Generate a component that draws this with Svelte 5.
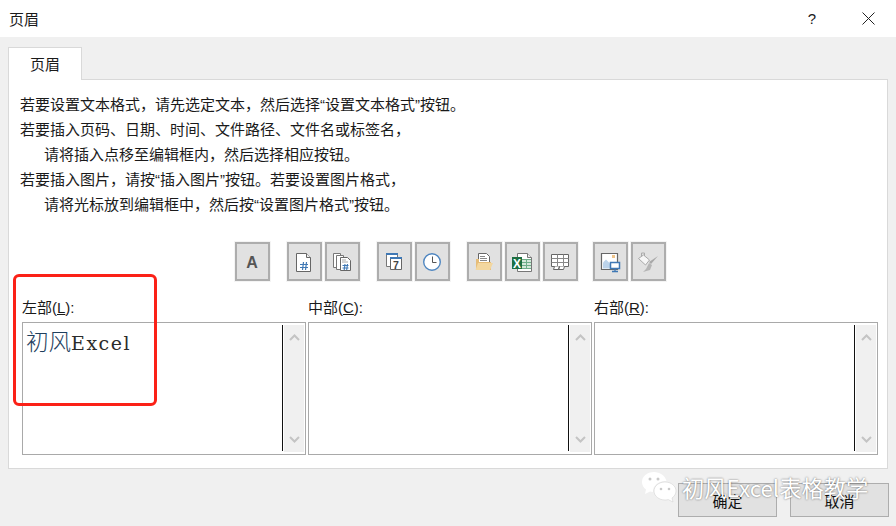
<script>
  const editors = [
    { label: '左部', key: 'L', cjk: '初风', latin: 'Excel' },
    { label: '中部', key: 'C', cjk: '', latin: '' },
    { label: '右部', key: 'R', cjk: '', latin: '' }
  ];
</script>

{#snippet tool(id)}
  <button class="tool" aria-label={id}>
    <svg width="31" height="35" viewBox="0 0 31 35">
      {#if id === 'text'}
        <text x="15" y="24" text-anchor="middle" class="a">A</text>
      {:else if id === 'page'}
        <path d="M7.500 9.500h10l4 4v14h-14z" fill="#fff" stroke="#666" />
        <path d="M17.500 9.500v4h4" fill="#eee" stroke="#666" />
        <path d="M11 20.500h8M11 23.500h8M14.500 18l-1 8M17.500 18l-1 8" stroke="#3f78b5" stroke-width="1.200" fill="none" />
      {:else if id === 'pages'}
        <path d="M6.500 9.500h7v14h-7z" fill="#fff" stroke="#777" />
        <path d="M9.500 11.500h7v14h-7z" fill="#fff" stroke="#777" />
        <path d="M13.500 13.500h7l3 3v10h-10z" fill="#fff" stroke="#666" />
        <path d="M15 16h4M15 18h6" stroke="#aaa" />
        <path d="M15.500 21.500h6M15.500 24h6M18 20l-.8 6M20.500 20l-.8 6" stroke="#3f78b5" stroke-width="1.100" fill="none" />
      {:else if id === 'date'}
        <path d="M7.500 10.500h11v12h-11z" fill="#fff" stroke="#777" />
        <path d="M7 9h12v2H7z" fill="#3f78b5" />
        <path d="M11.500 14.500h11v11h-11z" fill="#fff" stroke="#666" />
        <path d="M11 13h12v2H11z" fill="#3f78b5" />
        <text x="17" y="24.500" text-anchor="middle" class="seven">7</text>
      {:else if id === 'time'}
        <circle cx="15" cy="18" r="8.300" fill="#fff" stroke="#4f86c0" stroke-width="1.400" />
        <path d="M15.500 12.500v6h4" stroke="#555" fill="none" />
      {:else if id === 'path'}
        <path d="M9.500 9.500h8l3 3v8h-11z" fill="#fff" stroke="#666" />
        <path d="M11 12.500h5M11 14.500h7M11 16.500h7" stroke="#888" />
        <path d="M7 15h3v3h12v8H7z" fill="#e6bd78" />
        <path d="M9 19h15l-3 7H6.500z" fill="#f3d79f" />
      {:else if id === 'file'}
        <path d="M10.500 9.500h10l4 4v14h-14z" fill="#fff" stroke="#777" />
        <path d="M20.500 9.500v4h4" fill="#eee" stroke="#777" />
        <path d="M15 15h9v9h-9z" fill="#d5e8db" />
        <path d="M15 15.500h9M15 18.500h9M15 21.500h9M15 24.500h9M19.500 15v10" stroke="#6fae89" />
        <path d="M5 13h10v12H5z" fill="#1d6f42" />
        <text x="10" y="23.500" text-anchor="middle" class="x">X</text>
      {:else if id === 'sheet'}
        <path d="M6.500 10.500h17v12h-17z" fill="#fff" stroke="#666" />
        <path d="M6.500 14.500h17M6.500 18.500h17M12.500 10.500v12M18.500 10.500v12" stroke="#888" fill="none" />
        <path d="M9.500 22.500l-1 3h5l1-3M14.500 22.500l-1 3h5l1-3" fill="#fff" stroke="#666" />
      {:else if id === 'picture'}
        <path d="M6.500 9.500h16v16h-16z" fill="#fff" stroke="#666" stroke-width="1.200" />
        <path d="M8 24.500v-6l3-3 4 4v5z" fill="#bcd3ea" />
        <rect x="17" y="11" width="3" height="3" fill="#efc48a" />
        <path d="M15.500 18.500h9v6h-9z" fill="#fff" stroke="#3f78b5" stroke-width="1.500" />
        <path d="M20 25v3M17 27.500h6" stroke="#3f78b5" stroke-width="1.300" />
      {:else}
        <path d="M5.500 14.500l5-3.500 6 5-4 5z" fill="#f6f6f6" stroke="#aaa" />
        <path d="M8.500 12v-3h3v3" fill="none" stroke="#aaa" />
        <path d="M25 12l-7 8-2-2z" fill="#a8a8a8" />
        <path d="M16 19l3 2-2 5-7 2 3-3z" fill="#b5b5b5" />
      {/if}
    </svg>
  </button>
{/snippet}

<div class="dialog">
  <header class="titlebar">
    <span class="title">页眉</span>
    <div class="controls">
      <span class="help">?</span>
      <svg class="close" width="13" height="13" viewBox="0 0 13 13"><path d="M.5.500l12 12M12.500.500l-12 12" stroke="#222" fill="none" /></svg>
    </div>
  </header>

  <div class="body">
    <div class="tabs"><div class="tab">页眉</div></div>
    <section class="panel">
      <div class="intro">
        <p>若要设置文本格式，请先选定文本，然后选择“设置文本格式”按钮。</p>
        <p>若要插入页码、日期、时间、文件路径、文件名或标签名，</p>
        <p class="indent">请将插入点移至编辑框内，然后选择相应按钮。</p>
        <p>若要插入图片，请按“插入图片”按钮。若要设置图片格式，</p>
        <p class="indent">请将光标放到编辑框中，然后按“设置图片格式”按钮。</p>
      </div>

      <div class="toolbar">
        <div class="group">{@render tool('text')}</div>
        <div class="group">{@render tool('page')}{@render tool('pages')}</div>
        <div class="group">{@render tool('date')}{@render tool('time')}</div>
        <div class="group">{@render tool('path')}{@render tool('file')}{@render tool('sheet')}</div>
        <div class="group last">{@render tool('picture')}{@render tool('format')}</div>
      </div>

      <div class="editors">
        {#each editors as e}
          <div class="editor">
            <div class="label">{e.label}(<u>{e.key}</u>):</div>
            <div class="box">
              <div class="content"><span class="cjk">{e.cjk}</span><span class="latin">{e.latin}</span></div>
              <div class="scroll">
                <svg width="11" height="7" viewBox="0 0 11 7"><path d="M1 6l4.500-4.500L10 6" fill="none" stroke="#c4c4c4" stroke-width="2" /></svg>
                <svg width="11" height="7" viewBox="0 0 11 7"><path d="M1 1l4.500 4.500L10 1" fill="none" stroke="#c4c4c4" stroke-width="2" /></svg>
              </div>
            </div>
          </div>
        {/each}
      </div>
    </section>

    <footer class="footer">
      <button class="action">确定</button>
      <button class="action">取消</button>
    </footer>
  </div>

  <div class="highlight"></div>

  <div class="watermark">
    <svg width="36" height="32" viewBox="0 0 36 32">
      <path d="M13 1C6 1 1 5.500 1 11c0 3 1.500 5.500 4 7.500L4 23l5-2.500c1 .3 2 .4 3 .5-.5-6 5-11 12-11 .5 0 1 0 1.500.1C24 4.500 19 1 13 1z" fill="#fff" />
      <path d="M35 20c0-5-5-9-11-9s-11 4-11 9 5 9 11 9c1.200 0 2.200-.1 3.300-.4L32 31l-1-4c2.500-1.700 4-4.200 4-7z" fill="#fff" stroke="#ccc" stroke-width=".5" />
      <circle cx="9" cy="8" r="1.500" fill="#c9c9c9" /><circle cx="17" cy="8" r="1.500" fill="#c9c9c9" />
      <circle cx="20" cy="18" r="1.300" fill="#c9c9c9" /><circle cx="28" cy="18" r="1.300" fill="#c9c9c9" />
    </svg>
    <span>初风Excel表格教学</span>
  </div>
</div>

<style>
  :global(body) { margin: 0; }
  .dialog {
    position: relative;
    width: 896px;
    height: 526px;
    overflow: hidden;
    background: #f0f0f0;
    color: #1a1a1a;
    font-family: "Liberation Sans", "Noto Sans CJK SC", sans-serif;
    font-size: 15px;
  }
  .titlebar {
    height: 37px;
    background: #fff;
    display: flex;
    align-items: center;
    justify-content: space-between;
    padding: 0 21px 0 9px;
  }
  .controls { display: flex; align-items: center; gap: 46px; }
  .help { font-size: 15px; }
  .close { display: block; margin-top: -1px; }
  .body { padding: 10px 8px 0; }
  .tabs { display: flex; height: 33px; }
  .tab {
    width: 74px;
    height: 33px;
    box-sizing: border-box;
    background: #fff;
    border: 1px solid #d9d9d9;
    border-bottom: 0;
    position: relative;
    z-index: 1;
    text-align: center;
    line-height: 34px;
  }
  .panel {
    width: 880px;
    height: 390px;
    margin-top: -1px;
    box-sizing: border-box;
    background: #fff;
    border: 1px solid #d9d9d9;
    padding: 12px 8px 0 13px;
  }
  .intro { height: 150px; margin-left: -2px; }
  .intro p { margin: 0; height: 25px; line-height: 25px; white-space: nowrap; }
  .indent { padding-left: 24px; }
  .toolbar {
    display: flex;
    gap: 17px;
    height: 40px;
    padding-left: 213px;
  }
  .group { display: flex; gap: 3px; }
  .group.last { margin-left: -2px; }
  .tool {
    width: 35px;
    height: 39px;
    padding: 0;
    background: #e1e1e1;
    border: 2px solid #adadad;
    outline: 1px solid #f4f4f4;
    display: flex;
    align-items: flex-start;
    justify-content: flex-start;
  }
  .tool svg { display: block; }
  .a { font-family: "Liberation Sans", sans-serif; font-weight: 700; font-size: 16px; fill: #555; }
  .seven { font-family: "Liberation Sans", sans-serif; font-size: 10.500px; font-weight: 700; fill: #444; }
  .x { font-family: "Liberation Sans", sans-serif; font-size: 12px; font-weight: 700; fill: #fff; }
  .editors { display: flex; gap: 2px; margin-top: 14px; }
  .editor { width: 284px; }
  .label { height: 26px; line-height: 24px; white-space: nowrap; }
  .box {
    height: 133px;
    box-sizing: border-box;
    border: 1px solid #a9a9a9;
    display: flex;
    background: #fff;
  }
  .content {
    flex: 1;
    height: 126px;
    line-height: 30px;
    padding-left: 3px;
    border-right: 1px solid #111;
    margin: 2px 0;
    white-space: nowrap;
  }
  .cjk { font-family: "Noto Sans CJK SC", sans-serif; font-size: 22.500px; font-weight: 300; color: #1f3f5e; }
  .latin { font-family: "DejaVu Serif", serif; font-size: 19px; letter-spacing: 1.500px; color: #2b2b2b; }
  .scroll {
    width: 20px;
    margin: 2px 1px 2px 1px;
    background: #f0f0f0;
    display: flex;
    flex-direction: column;
    justify-content: space-between;
    align-items: center;
    padding: 9px 0;
    box-sizing: border-box;
  }
  .scroll svg { display: block; }
  .footer {
    display: flex;
    justify-content: flex-end;
    gap: 13px;
    margin-top: 14px;
    width: 881px;
  }
  .action {
    width: 99px;
    height: 34px;
    padding: 0;
    background: #e1e1e1;
    border: 1px solid #adadad;
    color: #111;
    font: inherit;
  }
  .highlight {
    position: absolute;
    left: 13px;
    top: 274px;
    width: 144px;
    height: 132px;
    box-sizing: border-box;
    border: 3.500px solid #fb2117;
    border-radius: 6px;
    pointer-events: none;
  }
  .watermark {
    position: absolute;
    left: 641px;
    top: 471px;
    display: flex;
    align-items: center;
    gap: 5px;
    color: #fff;
    font-family: "Noto Sans CJK SC", sans-serif;
    font-size: 22.300px;
    line-height: 32px;
    white-space: nowrap;
    text-shadow: 0 0 2px rgba(0,0,0,.6);
  }
  .watermark svg { display: block; }
</style>
